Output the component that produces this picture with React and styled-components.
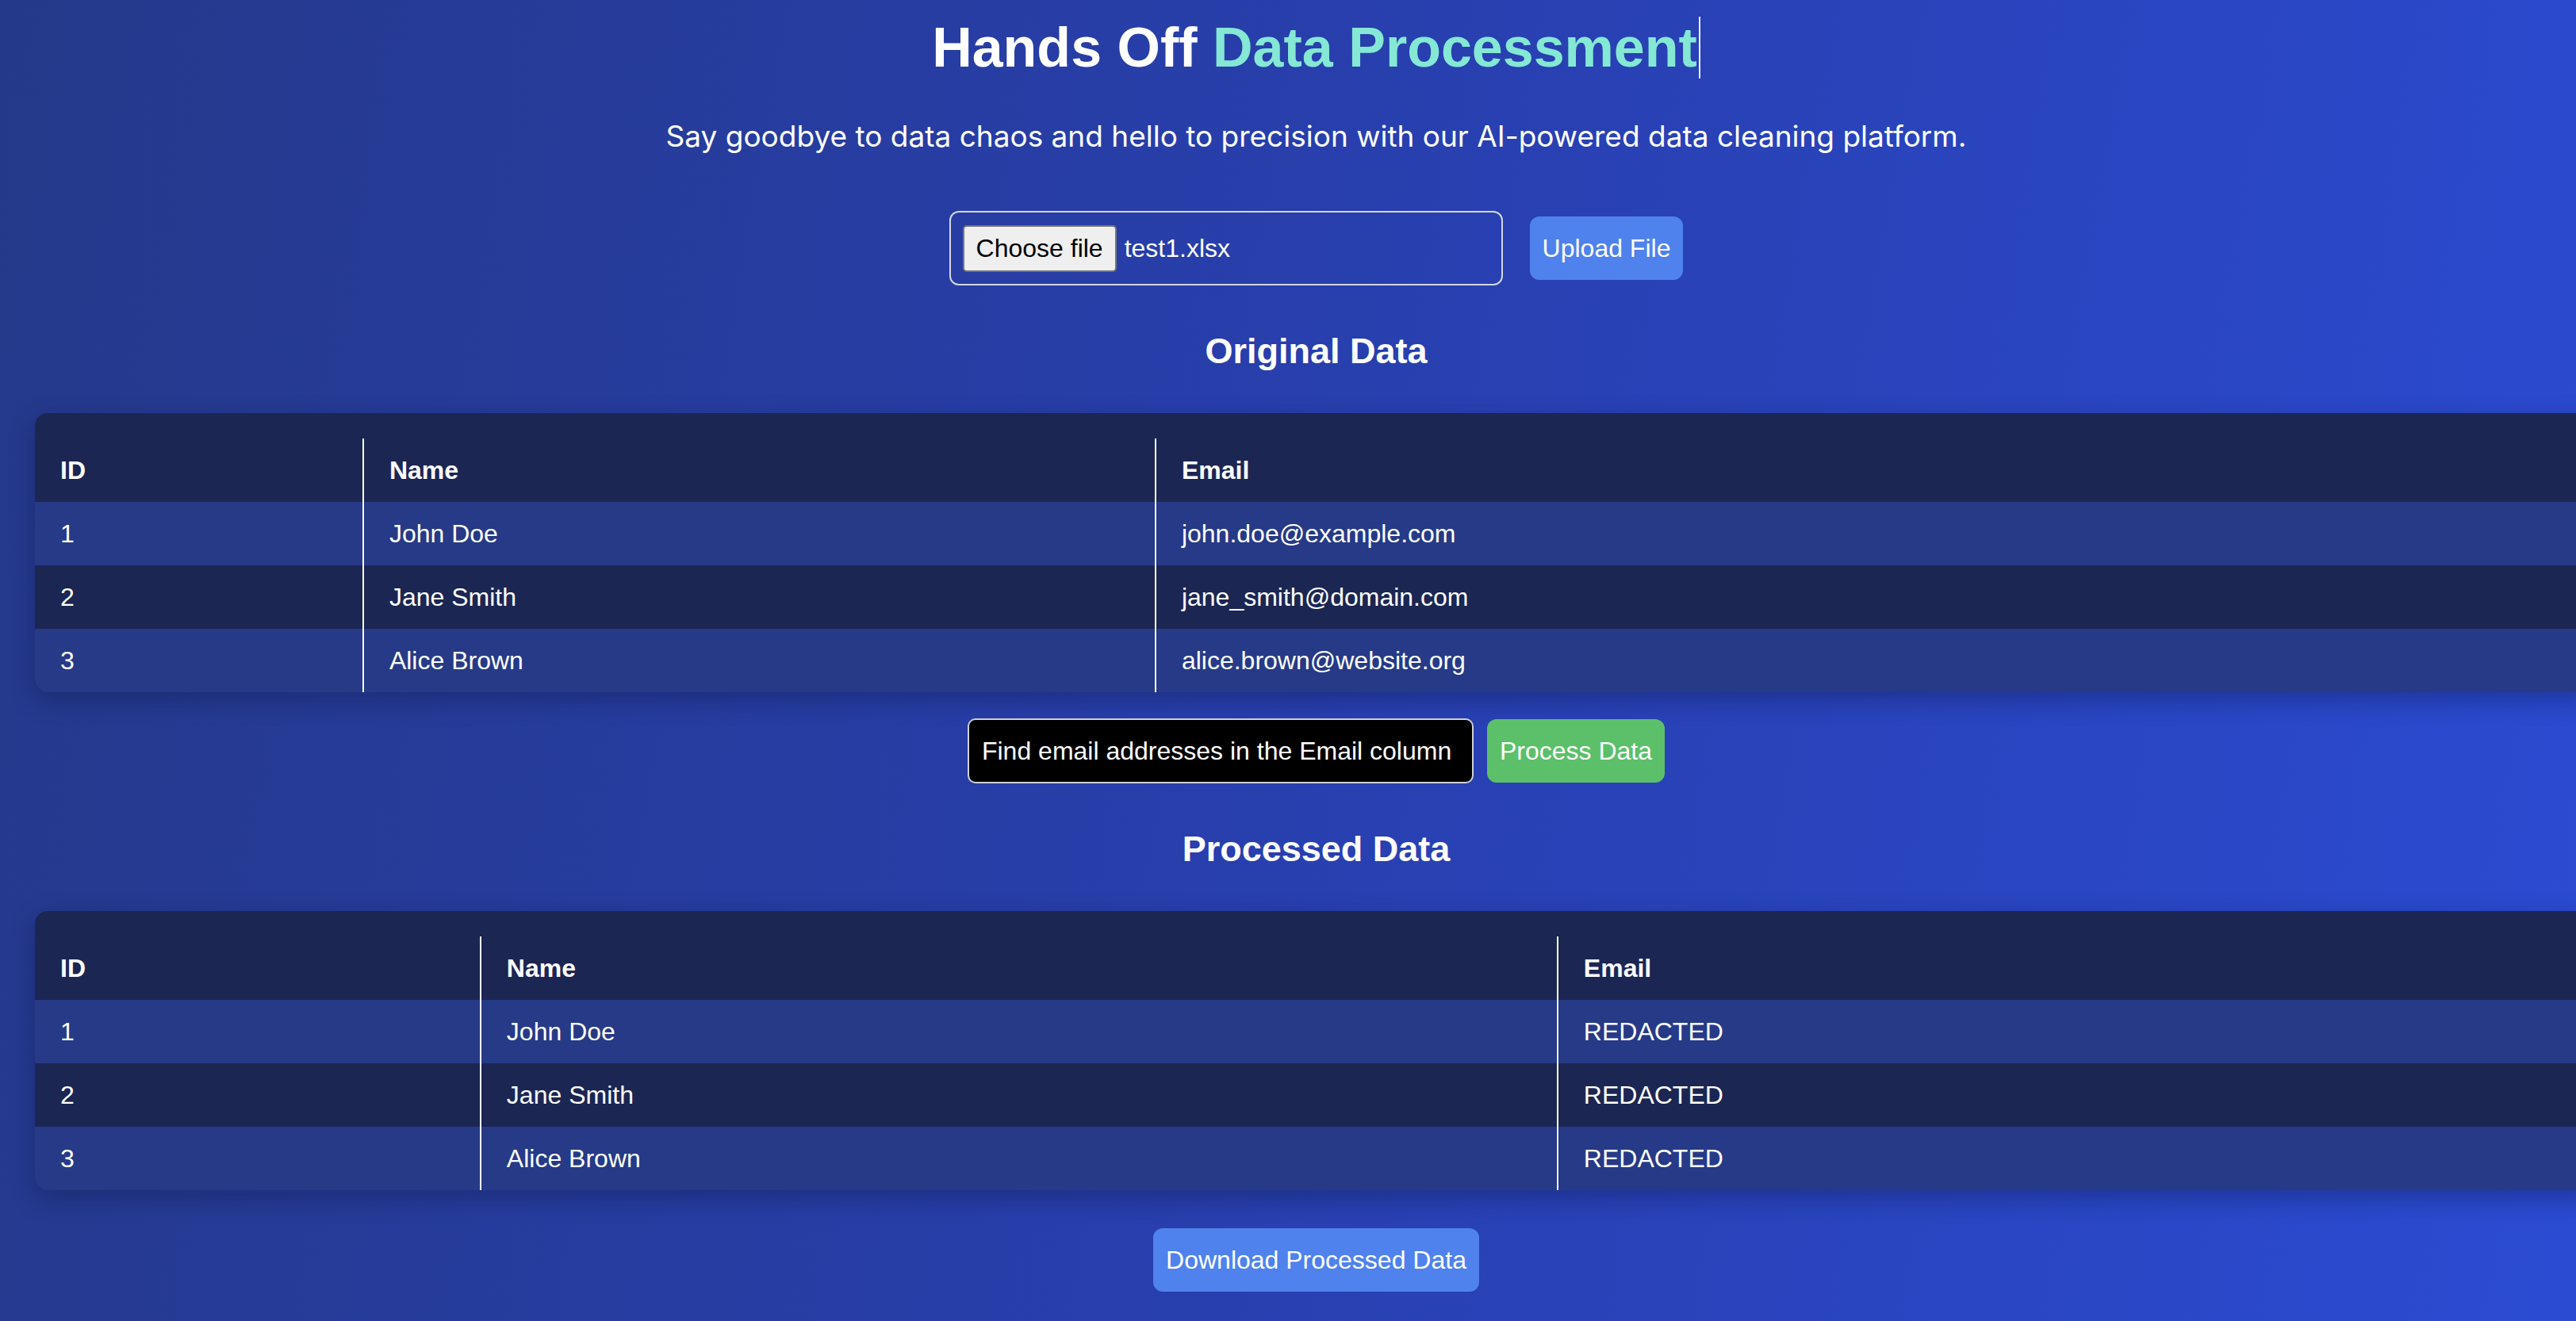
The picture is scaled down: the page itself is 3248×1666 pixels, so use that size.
import React from 'react';
import styled, {createGlobalStyle} from 'styled-components';

const GlobalStyle = createGlobalStyle`
    html, body {
        margin: 0;
        padding: 0;
        overflow: hidden;
    }
    body {
        font-family: "Liberation Sans", Arial, Helvetica, sans-serif;
        color: #ffffff;
    }
    * {
        box-sizing: border-box;
    }
`;

const Page = styled.div`
    min-height: 1666px;
    padding: 20px 0 0 44px;
    background: linear-gradient(100deg, #25398a 0%, #283fae 50%, #2b4bd2 100%);
`;

const Content = styled.div`
    width: 3231px;
    display: flex;
    flex-direction: column;
    align-items: center;
`;

const Title = styled.h1`
    margin: 0;
    font-size: 70px;
    line-height: 80px;
    font-weight: 700;
    color: #ffffff;
`;

const Typed = styled.span`
    padding-right: 2px;
    border-right: 2px solid #eef0f8;
`;

const Highlight = styled.span`
    color: #84e8d4;
`;

const Subtitle = styled.p`
    margin: 50px 0 0;
    font-family: Inter, "Liberation Sans", sans-serif;
    font-size: 37px;
    line-height: 44px;
    color: #ffffff;
`;

const ActionRow = styled.div`
    display: flex;
    align-items: center;
    gap: ${props => props.$gap}px;
    margin-top: ${props => props.$top}px;
`;

const FileBox = styled.label`
    display: flex;
    align-items: center;
    gap: 10px;
    width: 698px;
    height: 94px;
    padding: 0 15px;
    border: 2px solid #d3d6e2;
    border-radius: 12px;
    font-family: "Liberation Sans", Arial, sans-serif;
    font-size: 32px;
    cursor: pointer;
`;

const FileButton = styled.span`
    display: flex;
    align-items: center;
    height: 59px;
    padding: 0 15px;
    background: #efefef;
    color: #000000;
    border: 2px solid #767676;
    border-radius: 5px;
`;

const FileName = styled.span`
    color: #ffffff;
`;

const Button = styled.button`
    height: 80px;
    padding: 0 16px;
    border: none;
    border-radius: 12px;
    background: ${props => props.$color};
    color: #ffffff;
    font-family: "Liberation Sans", Arial, sans-serif;
    font-size: 32px;
    line-height: 48px;
    cursor: pointer;
`;

const PromptInput = styled.input`
    width: 638px;
    height: 82px;
    padding: 0 16px;
    background: #000000;
    color: #ffffff;
    border: 2px solid #cfd1d8;
    border-radius: 10px;
    font-family: "Liberation Sans", Arial, sans-serif;
    font-size: 32px;
    outline: none;
`;

const SectionTitle = styled.h2`
    margin: 57px 0 52px;
    font-size: 45px;
    line-height: 52px;
    font-weight: 700;
    color: #ffffff;
`;

const TableCard = styled.div`
    align-self: stretch;
    padding-top: 32px;
    background: #1b2653;
    border-radius: 16px;
    overflow: hidden;
    box-shadow: 0 10px 30px rgba(10, 18, 60, 0.35);
`;

const Table = styled.table`
    width: 100%;
    border-collapse: collapse;
    table-layout: fixed;
`;

const Col = styled.col`
    width: ${props => props.$width}%;
`;

const HeadCell = styled.th`
    height: 80px;
    padding: 16px 32px;
    font-size: 32px;
    line-height: 48px;
    font-weight: 700;
    text-align: left;
    color: #ffffff;

    & + & {
        border-left: 2px solid #ffffff;
    }
`;

const Row = styled.tr`
    background: ${props => props.$striped ? '#263a87' : '#1b2653'};
`;

const Cell = styled.td`
    height: 80px;
    padding: 16px 32px;
    font-size: 32px;
    line-height: 48px;
    color: #ffffff;

    & + & {
        border-left: 2px solid #ffffff;
    }
`;

const COLUMNS = ['ID', 'Name', 'Email'];

const ORIGINAL_ROWS = [
    {id: 1, name: 'John Doe', email: 'john.doe@example.com'},
    {id: 2, name: 'Jane Smith', email: 'jane_smith@domain.com'},
    {id: 3, name: 'Alice Brown', email: 'alice.brown@website.org'},
];

const PROCESSED_ROWS = ORIGINAL_ROWS.map(row => ({...row, email: 'REDACTED'}));

const DataTable = ({rows, widths}) => {
    return (
        <TableCard>
            <Table>
                <colgroup>
                    {widths.map((w, i) => <Col key={i} $width={w}/>)}
                </colgroup>
                <thead>
                    <tr>
                        {COLUMNS.map(col => <HeadCell key={col}>{col}</HeadCell>)}
                    </tr>
                </thead>
                <tbody>
                    {rows.map((row, i) => (
                        <Row key={row.id} $striped={i % 2 === 0}>
                            <Cell>{row.id}</Cell>
                            <Cell>{row.name}</Cell>
                            <Cell>{row.email}</Cell>
                        </Row>
                    ))}
                </tbody>
            </Table>
        </TableCard>
    )
}

const App = () => {
    return (
        <>
            <GlobalStyle/>
            <Page>
                <Content>
                    <Title>
                        <Typed>Hands Off <Highlight>Data Processment</Highlight></Typed>
                    </Title>
                    <Subtitle>
                        Say goodbye to data chaos and hello to precision with our AI-powered data cleaning platform.
                    </Subtitle>

                    <ActionRow $top={72} $gap={34}>
                        <FileBox>
                            <FileButton>Choose file</FileButton>
                            <FileName>test1.xlsx</FileName>
                        </FileBox>
                        <Button $color="#4f82ec">Upload File</Button>
                    </ActionRow>

                    <SectionTitle>Original Data</SectionTitle>
                    <DataTable rows={ORIGINAL_ROWS} widths={[12.81, 30.92, 56.27]}/>

                    <ActionRow $top={33} $gap={17}>
                        <PromptInput
                            type="text"
                            defaultValue="Find email addresses in the Email column and replace them with REDACTED"
                        />
                        <Button $color="#5cc06a">Process Data</Button>
                    </ActionRow>

                    <SectionTitle>Processed Data</SectionTitle>
                    <DataTable rows={PROCESSED_ROWS} widths={[17.39, 42.03, 40.58]}/>

                    <ActionRow $top={48} $gap={0}>
                        <Button $color="#4f82ec">Download Processed Data</Button>
                    </ActionRow>
                </Content>
            </Page>
        </>
    );
};

export default App;
